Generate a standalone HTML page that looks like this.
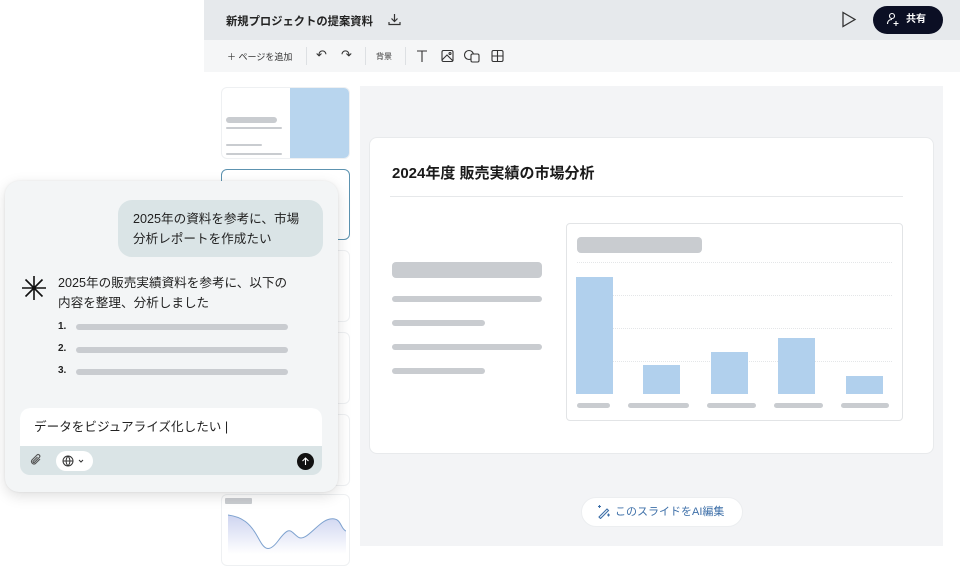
<!DOCTYPE html>
<html><head><meta charset="utf-8"><style>
*{box-sizing:border-box;margin:0;padding:0}
body{width:960px;height:561px;overflow:hidden;background:#fff;font-family:"Liberation Sans","Noto Sans CJK JP",sans-serif;position:relative;color:#222}
.abs{position:absolute}
.bar{background:#c9ccd0;border-radius:4px}
.thumb{position:absolute;left:221px;width:129px;background:#fff;border:1px solid #eef0f2;border-radius:6px}
</style></head><body>
<div class="abs" style="left:204px;top:0;width:756px;height:40px;background:#e6e9ec"></div>
<div class="abs" style="left:226px;top:13px;font-size:11.3px;font-weight:bold;color:#222">新規プロジェクトの提案資料</div>
<svg class="abs" style="left:388px;top:13px" width="13" height="13" viewBox="0 0 13 13" fill="none" stroke="#333" stroke-width="1.2"><path d="M6.5 1v7M3.5 5.5l3 3 3-3M1 9v2.5h11V9"/></svg>
<svg class="abs" style="left:841px;top:11px" width="16" height="17" viewBox="0 0 16 17" fill="none" stroke="#333" stroke-width="1.3"><path d="M2 1.5v14l12-7z"/></svg>
<div class="abs" style="left:873px;top:6px;width:70px;height:28px;background:#0b0f24;border-radius:14px;color:#fff;font-size:10px;font-weight:bold;line-height:28px;padding-left:33px">共有</div>
<svg class="abs" style="left:886px;top:12px" width="15" height="15" viewBox="0 0 15 15" fill="none" stroke="#fff" stroke-width="1.1"><circle cx="6" cy="4" r="2.5"/><path d="M1.5 12c0-3 2-4.5 4.5-4.5M10 9v5M7.5 11.5h5"/></svg>

<div class="abs" style="left:204px;top:40px;width:756px;height:32px;background:#f5f6f7"></div>
<div class="abs" style="left:227px;top:50px;font-size:9px;color:#333">＋ ページを追加</div>
<div class="abs" style="left:306px;top:47px;width:1px;height:18px;background:#dde0e3"></div>
<div class="abs" style="left:316px;top:47px;font-size:13px;color:#333">↶</div>
<div class="abs" style="left:341px;top:47px;font-size:13px;color:#333">↷</div>
<div class="abs" style="left:365px;top:47px;width:1px;height:18px;background:#dde0e3"></div>
<div class="abs" style="left:376px;top:51px;font-size:8px;color:#333">背景</div>
<div class="abs" style="left:405px;top:47px;width:1px;height:18px;background:#dde0e3"></div>
<svg class="abs" style="left:415px;top:49px" width="100" height="14" viewBox="0 0 100 14" fill="none" stroke="#333" stroke-width="1.1"><path d="M2 2h10M7 2v11"/><rect x="27" y="1.5" width="11" height="11" rx="1.5"/><path d="M27 11l5-5 6 6"/><circle cx="35" cy="4.5" r="1"/><circle cx="54" cy="6" r="4.5"/><rect x="56" y="5" width="8" height="8" rx="1.5" fill="#f5f6f7"/><rect x="77" y="1.5" width="11" height="11" rx="1.5"/><path d="M82.5 1.5v11M77 7h11"/></svg>

<div class="abs" style="left:360px;top:86px;width:583px;height:460px;background:#f3f4f6"></div>
<div class="abs" style="left:369px;top:137px;width:565px;height:317px;background:#fff;border:1px solid #e8eaec;border-radius:8px"></div>
<div class="abs" style="left:392px;top:162px;font-size:15px;font-weight:bold;color:#1a1a1a">2024年度 販売実績の市場分析</div>
<div class="abs" style="left:390px;top:196px;width:513px;height:1px;background:#e6e8ea"></div>
<div class="abs bar" style="left:392px;top:262px;width:150px;height:16px"></div>
<div class="abs bar" style="left:392px;top:296px;width:150px;height:6px;border-radius:3px"></div>
<div class="abs bar" style="left:392px;top:320px;width:93px;height:6px;border-radius:3px"></div>
<div class="abs bar" style="left:392px;top:344px;width:150px;height:6px;border-radius:3px"></div>
<div class="abs bar" style="left:392px;top:368px;width:93px;height:6px;border-radius:3px"></div>
<div class="abs" style="left:566px;top:223px;width:337px;height:198px;border:1px solid #e2e4e6;border-radius:4px;background:#fff"></div>
<div class="abs bar" style="left:577px;top:237px;width:125px;height:16px"></div>
<div class="abs" style="left:577px;top:262px;width:315px;border-top:1px dotted #e4e6e8"></div>
<div class="abs" style="left:577px;top:295px;width:315px;border-top:1px dotted #e4e6e8"></div>
<div class="abs" style="left:577px;top:328px;width:315px;border-top:1px dotted #e4e6e8"></div>
<div class="abs" style="left:577px;top:361px;width:315px;border-top:1px dotted #e4e6e8"></div>
<div class="abs" style="left:576px;top:277px;width:37px;height:117px;background:#b1d0ed"></div>
<div class="abs" style="left:643px;top:365px;width:37px;height:29px;background:#b1d0ed"></div>
<div class="abs" style="left:711px;top:352px;width:37px;height:42px;background:#b1d0ed"></div>
<div class="abs" style="left:778px;top:338px;width:37px;height:56px;background:#b1d0ed"></div>
<div class="abs" style="left:846px;top:376px;width:37px;height:18px;background:#b1d0ed"></div>
<div class="abs bar" style="left:577px;top:403px;width:33px;height:5px"></div>
<div class="abs bar" style="left:628px;top:403px;width:61px;height:5px"></div>
<div class="abs bar" style="left:707px;top:403px;width:49px;height:5px"></div>
<div class="abs bar" style="left:774px;top:403px;width:49px;height:5px"></div>
<div class="abs bar" style="left:841px;top:403px;width:48px;height:5px"></div>
<div class="abs" style="left:581px;top:497px;width:162px;height:30px;background:#fff;border:1px solid #eceef0;border-radius:15px;color:#3d6fa8;font-size:11px;line-height:28px;padding-left:33px">このスライドをAI編集</div>
<svg class="abs" style="left:596px;top:504px" width="15" height="15" viewBox="0 0 15 15" fill="none" stroke="#3d6fa8" stroke-width="1.1"><path d="M3 13l8-8 1.5 1.5-8 8zM2 2.5h3M3.5 1v3M11 11h3M12.5 9.5v3"/></svg>

<div class="thumb" style="top:87px;height:72px;overflow:hidden"><div class="abs" style="left:68px;top:0;width:61px;height:72px;background:#b8d5ee"></div><div class="abs bar" style="left:4px;top:29px;width:51px;height:6px"></div><div class="abs bar" style="left:4px;top:39px;width:56px;height:2px"></div><div class="abs bar" style="left:4px;top:56px;width:36px;height:2px"></div><div class="abs bar" style="left:4px;top:65px;width:56px;height:2px"></div></div>
<div class="thumb" style="top:169px;height:71px;border:1.5px solid #5d93b0"></div>
<div class="thumb" style="top:250px;height:72px"></div>
<div class="thumb" style="top:332px;height:72px"></div>
<div class="thumb" style="top:414px;height:72px"></div>
<div class="thumb" style="top:494px;height:72px;overflow:hidden"><div class="abs bar" style="left:3px;top:3px;width:27px;height:6px;border-radius:1px"></div>
<svg class="abs" style="left:6px;top:14px" width="118" height="45" viewBox="0 0 118 45"><defs><linearGradient id="g" x1="0" y1="0" x2="0" y2="1"><stop offset="0" stop-color="#b9c2ea"/><stop offset="1" stop-color="#fff"/></linearGradient></defs><path d="M0 6C15 8 22 15 28 25S38 48 50 32S62 22 70 28S90 12 102 10S112 20 118 22V45H0z" fill="url(#g)" opacity=".7"/><path d="M0 6C15 8 22 15 28 25S38 48 50 32S62 22 70 28S90 12 102 10S112 20 118 22" fill="none" stroke="#7ea2cf" stroke-width="1"/></svg></div>

<div class="abs" style="left:5px;top:181px;width:333px;height:311px;background:#f3f5f6;border-radius:14px;box-shadow:0 4px 14px rgba(0,0,0,.13),0 0 2px rgba(0,0,0,.08)"></div>
<div class="abs" style="left:118px;top:200px;width:205px;height:57px;background:#dae4e6;border-radius:14px;font-size:12.6px;line-height:20px;padding:9px 0 0 15px;color:#222">2025年の資料を参考に、市場<br>分析レポートを作成たい</div>
<svg class="abs" style="left:21px;top:275px" width="26" height="26" viewBox="0 0 26 26" stroke="#111"><path d="M13 1v24M1 13h24M4.5 4.5l17 17M21.5 4.5l-17 17" stroke-width="1.6"/></svg>
<div class="abs" style="left:58px;top:273px;font-size:12.6px;line-height:20px;color:#222">2025年の販売実績資料を参考に、以下の<br>内容を整理、分析しました</div>
<div class="abs" style="left:58px;top:321px;font-size:10px;font-weight:bold">1.</div>
<div class="abs" style="left:58px;top:343px;font-size:10px;font-weight:bold">2.</div>
<div class="abs" style="left:58px;top:365px;font-size:10px;font-weight:bold">3.</div>
<div class="abs bar" style="left:76px;top:324px;width:212px;height:6px;border-radius:3px"></div>
<div class="abs bar" style="left:76px;top:347px;width:212px;height:6px;border-radius:3px"></div>
<div class="abs bar" style="left:76px;top:369px;width:212px;height:6px;border-radius:3px"></div>
<div class="abs" style="left:20px;top:408px;width:302px;height:67px;background:#dae4e6;border-radius:10px;overflow:hidden"><div style="height:38px;background:#fff;font-size:12.6px;line-height:38px;padding-left:14px;color:#222">データをビジュアライズ化したい<span style="font-weight:normal"> |</span></div></div>
<svg class="abs" style="left:29px;top:453px" width="14" height="14" viewBox="0 0 14 14" fill="none" stroke="#555" stroke-width="1.1"><path d="M11 6l-4.5 4.5a2.5 2.5 0 01-3.5-3.5L8 2a1.7 1.7 0 012.4 2.4L5.5 9.3a.8.8 0 01-1.2-1.2L8.5 4"/></svg>
<div class="abs" style="left:56px;top:451px;width:37px;height:20px;background:#fff;border-radius:10px"></div>
<svg class="abs" style="left:62px;top:455px" width="26" height="12" viewBox="0 0 26 12" fill="none" stroke="#333" stroke-width="1"><circle cx="6" cy="6" r="5"/><path d="M1 6h10M6 1c-2.5 3-2.5 7 0 10M6 1c2.5 3 2.5 7 0 10M17 5l2 2 2-2"/></svg>
<div class="abs" style="left:297px;top:453px;width:17px;height:17px;border-radius:50%;background:#111"></div>
<svg class="abs" style="left:300px;top:456px" width="11" height="11" viewBox="0 0 11 11" fill="none" stroke="#fff" stroke-width="1.1"><path d="M5.5 9V2M2.5 5l3-3 3 3"/></svg>
</body></html>
